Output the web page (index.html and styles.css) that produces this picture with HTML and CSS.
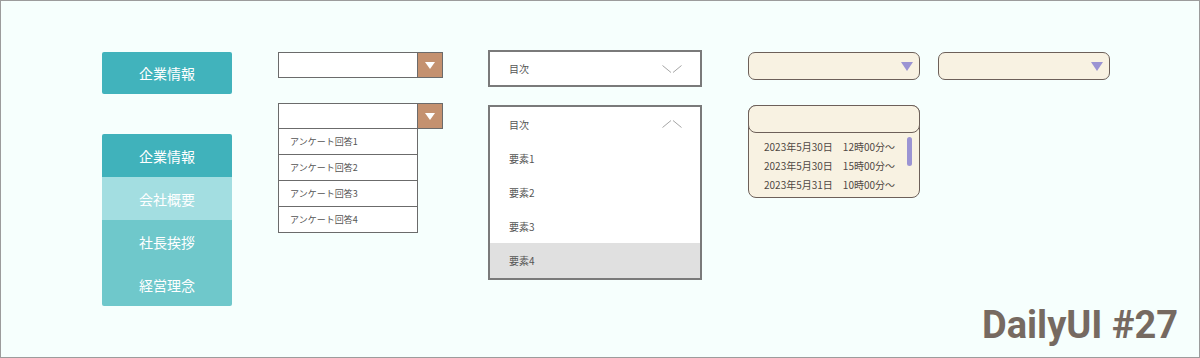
FILE: index.html
```html
<!DOCTYPE html>
<html lang="ja">
<head>
<meta charset="utf-8">
<title>DailyUI #27 Dropdown</title>
<link rel="stylesheet" href="styles.css">
</head>
<body>
<div class="page">
  <div class="row">
    <div class="col col-nav">
      <div class="btn">企業情報</div>
      <ul class="menu">
        <li class="m-main">企業情報</li>
        <li class="m-hover">会社概要</li>
        <li class="m-item">社長挨拶</li>
        <li class="m-item">経営理念</li>
      </ul>
    </div>

    <div class="col col-select">
      <div class="select">
        <div class="field"></div>
        <div class="arrow"><span class="tri"></span></div>
      </div>
      <div class="select select-open">
        <div class="field"></div>
        <div class="arrow"><span class="tri"></span></div>
      </div>
      <ul class="options">
        <li>アンケート回答1</li>
        <li>アンケート回答2</li>
        <li>アンケート回答3</li>
        <li>アンケート回答4</li>
      </ul>
    </div>

    <div class="col col-acc">
      <div class="acc">
        <div class="acc-head">
          <span>目次</span>
          <svg class="chev" width="20" height="8" viewBox="0 0 20 8"><line x1="0.5" y1="0.5" x2="9" y2="7.5"/><line x1="11" y1="7.5" x2="19.5" y2="0.5"/></svg>
        </div>
      </div>
      <div class="acc acc-open">
        <div class="acc-head">
          <span>目次</span>
          <svg class="chev" width="20" height="8" viewBox="0 0 20 8"><line x1="0.5" y1="7.5" x2="9" y2="0.5"/><line x1="11" y1="0.5" x2="19.5" y2="7.5"/></svg>
        </div>
        <ul class="acc-list">
          <li>要素1</li>
          <li>要素2</li>
          <li>要素3</li>
          <li class="active">要素4</li>
        </ul>
      </div>
    </div>

    <div class="col col-cream">
      <div class="cselect"><span class="ctri"></span></div>
      <div class="clist">
        <div class="chead"></div>
        <ul class="citems">
          <li>2023年5月30日　12時00分〜</li>
          <li>2023年5月30日　15時00分〜</li>
          <li>2023年5月31日　10時00分〜</li>
        </ul>
        <span class="scroll"></span>
      </div>
    </div>

    <div class="col col-cream2">
      <div class="cselect"><span class="ctri"></span></div>
    </div>
  </div>
  <div class="footer">DailyUI #27</div>
</div>
</body>
</html>
```

FILE: styles.css
```css
* { box-sizing: border-box; }
html, body { margin: 0; padding: 0; }
body { background: #f6fffd; }
ul { list-style: none; margin: 0; padding: 0; }

.page {
  width: 1200px;
  height: 358px;
  border: 1px solid #9c9c9c;
  background: #f6fffd;
  display: flex;
  flex-direction: column;
  font-family: "Noto Sans CJK JP", "Noto Sans", sans-serif;
}

.row {
  display: flex;
  align-items: flex-start;
  padding-top: 49px;
  padding-left: 101px;
}

/* nav */
.col-nav { width: 130px; margin-top: 2px; }
.btn {
  height: 42px;
  background: #41b3bc;
  border-radius: 2px;
  color: #fff;
  font-size: 14px;
  display: flex;
  align-items: center;
  justify-content: center;
}
.menu {
  margin-top: 40px;
  border-radius: 2px;
  overflow: hidden;
}
.menu li {
  height: 43px;
  display: flex;
  align-items: center;
  justify-content: center;
  color: #fff;
  font-size: 14px;
}
.m-main { background: #40b2bb; }
.m-hover { background: #a3dee1; }
.m-item { background: #6fc8cb; }

/* brown select */
.col-select { width: 165px; margin-left: 46px; margin-top: 2px; }
.select {
  height: 26px;
  display: flex;
  border: 1px solid #6b6b6b;
  background: #fff;
}
.select .field { flex: 1; }
.select .arrow {
  width: 25px;
  background: #c4916f;
  border-left: 1px solid #6b6b6b;
  display: flex;
  align-items: center;
  justify-content: center;
}
.tri {
  width: 0;
  height: 0;
  border-left: 5px solid transparent;
  border-right: 5px solid transparent;
  border-top: 7px solid #fff;
}
.select-open { margin-top: 25px; }
.options {
  width: 140px;
  border: 1px solid #6b6b6b;
  border-top: none;
  background: #fff;
}
.options li {
  height: 25px;
  line-height: 25px;
  padding-left: 11px;
  font-size: 9px;
  color: #555;
}
.options li + li { border-top: 1px solid #6b6b6b; height: 26px; }

/* accordion */
.col-acc { width: 214px; margin-left: 45px; }
.acc {
  border: 2px solid #7a7a7a;
  background: #fff;
}
.acc-head {
  height: 33px;
  display: flex;
  align-items: center;
  justify-content: space-between;
  padding: 0 18px 0 19px;
  font-size: 10px;
  color: #555;
}
.chev line { stroke: #a5a5a5; stroke-width: 1; }
.acc-open { margin-top: 18px; }
.acc-open .acc-head { height: 34px; }
.acc-list li {
  height: 34px;
  display: flex;
  align-items: center;
  padding-left: 19px;
  font-size: 10px;
  color: #555;
}
.acc-list li.active { background: #e0e0e0; height: 35px; }

/* cream select */
.col-cream { width: 172px; margin-left: 46px; margin-top: 2px; }
.col-cream2 { width: 172px; margin-left: 18px; margin-top: 2px; }
.cselect {
  height: 28px;
  border: 1px solid #6d6059;
  border-radius: 7px;
  background: #f8f2e2;
  display: flex;
  align-items: center;
  justify-content: flex-end;
  padding-right: 6px;
}
.ctri {
  width: 0;
  height: 0;
  border-left: 6px solid transparent;
  border-right: 6px solid transparent;
  border-top: 9px solid #9b94d3;
}
.clist {
  position: relative;
  margin-top: 25px;
  border: 1px solid #6d6059;
  border-radius: 8px;
  background: #f8f2e2;
}
.chead {
  height: 28px;
  margin: -1px -1px 0;
  border: 1px solid #6d6059;
  border-radius: 8px;
  background: #f8f2e2;
}
.citems { padding: 4px 0 3px 15px; }
.citems li {
  height: 19px;
  line-height: 19px;
  font-size: 10px;
  color: #504844;
  white-space: nowrap;
}
.scroll {
  position: absolute;
  right: 7px;
  top: 31px;
  width: 5px;
  height: 29px;
  border-radius: 3px;
  background: #9b94d3;
}

/* footer */
.footer {
  margin-top: auto;
  text-align: right;
  padding-right: 21px;
  padding-bottom: 16px;
  font-family: Roboto, "Liberation Sans", sans-serif;
  font-weight: 700;
  font-size: 38px;
  line-height: 38px;
  color: #766a61;
}
```
